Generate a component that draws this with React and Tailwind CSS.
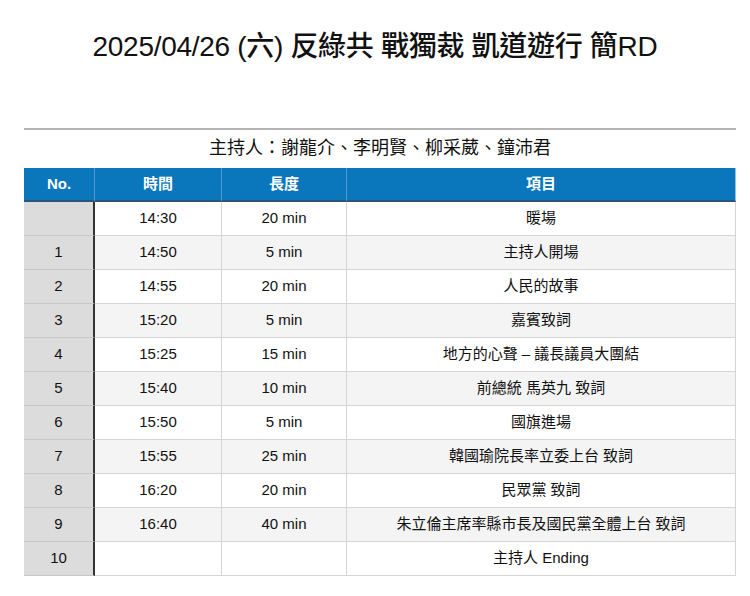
const rows = [
  { no: "", time: "14:30", len: "20 min", item: "暖場" },
  { no: "1", time: "14:50", len: "5 min", item: "主持人開場" },
  { no: "2", time: "14:55", len: "20 min", item: "人民的故事" },
  { no: "3", time: "15:20", len: "5 min", item: "嘉賓致詞" },
  { no: "4", time: "15:25", len: "15 min", item: "地方的心聲 – 議長議員大團結" },
  { no: "5", time: "15:40", len: "10 min", item: "前總統 馬英九 致詞" },
  { no: "6", time: "15:50", len: "5 min", item: "國旗進場" },
  { no: "7", time: "15:55", len: "25 min", item: "韓國瑜院長率立委上台 致詞" },
  { no: "8", time: "16:20", len: "20 min", item: "民眾黨 致詞" },
  { no: "9", time: "16:40", len: "40 min", item: "朱立倫主席率縣市長及國民黨全體上台 致詞" },
  { no: "10", time: "", len: "", item: "主持人 Ending" },
];

export default function App() {
  return (
    <div
      className="w-[750px] h-[596px] bg-white text-[#111] overflow-hidden"
      style={{ fontFamily: '"Liberation Sans", "Noto Sans CJK TC", sans-serif' }}
    >
      <h1 className="pt-[30px] text-center text-[28px] font-medium leading-[34px] tracking-[-0.3px]">
        2025/04/26 (六) 反綠共 戰獨裁 凱道遊行 簡RD
      </h1>

      <div className="ml-[24px] w-[712px] mt-[64px] border-t-2 border-[#b5b5b5]">
        <div className="h-[38px] flex items-center justify-center text-[18px] leading-none pb-[2px]">
          主持人：謝龍介、李明賢、柳采葳、鐘沛君
        </div>

        <div className="grid grid-cols-[71px_127px_125px_1fr] text-[15px]">
          <div className="h-[34px] flex items-center justify-center bg-[#0a76bc] text-white font-semibold border-b-2 border-[#2c5677] border-r border-r-[#4d9bd0]">
            No.
          </div>
          <div className="h-[34px] flex items-center justify-center bg-[#0a76bc] text-white font-semibold border-b-2 border-[#2c5677] border-r border-r-[#4d9bd0]">
            時間
          </div>
          <div className="h-[34px] flex items-center justify-center bg-[#0a76bc] text-white font-semibold border-b-2 border-[#2c5677] border-r border-r-[#4d9bd0]">
            長度
          </div>
          <div className="h-[34px] flex items-center justify-center bg-[#0a76bc] text-white font-semibold border-b-2 border-[#2c5677] border-r border-r-[#8cc3e6]">
            項目
          </div>

          {rows.map((r, i) => {
            const bg = i % 2 === 1 ? "bg-[#f4f4f4]" : "bg-white";
            return [
              <div
                key={`n${i}`}
                className="h-[34px] flex items-center justify-center bg-[#dcdcdc] border-b border-[#c8c8c8] border-r-2 border-r-[#333]"
              >
                {r.no}
              </div>,
              <div
                key={`t${i}`}
                className={`h-[34px] flex items-center justify-center ${bg} border-b border-r border-[#d4d4d4]`}
              >
                {r.time}
              </div>,
              <div
                key={`l${i}`}
                className={`h-[34px] flex items-center justify-center ${bg} border-b border-r border-[#d4d4d4]`}
              >
                {r.len}
              </div>,
              <div
                key={`i${i}`}
                className={`h-[34px] flex items-center justify-center ${bg} border-b border-r border-[#d4d4d4]`}
              >
                {r.item}
              </div>,
            ];
          })}
        </div>
      </div>
    </div>
  );
}
